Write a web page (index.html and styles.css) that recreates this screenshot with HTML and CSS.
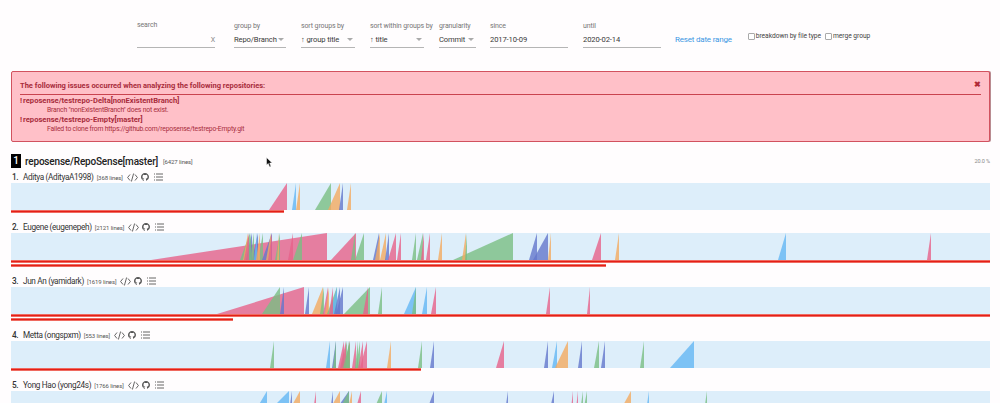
FILE: index.html
```html
<!DOCTYPE html>
<html lang="en">
<head>
<meta charset="utf-8">
<title>RepoSense</title>
<link rel="stylesheet" href="styles.css">
</head>
<body>
<svg class="defs" width="0" height="0" aria-hidden="true">
  <symbol id="i-code" viewBox="0 0 11 9"><path d="M3 1.5 .6 4.5 3 7.5M8 1.5l2.4 3L8 7.5M6.6.5 4.4 8.5" fill="none" stroke="currentColor" stroke-width=".9"/></symbol>
  <symbol id="i-gh" viewBox="0 0 16 16"><path fill="currentColor" d="M8 0C3.58 0 0 3.58 0 8c0 3.54 2.29 6.53 5.47 7.59.4.07.55-.17.55-.38 0-.19-.01-.82-.01-1.49-2.01.37-2.53-.49-2.69-.94-.09-.23-.48-.94-.82-1.13-.28-.15-.68-.52-.01-.53.63-.01 1.08.58 1.23.82.72 1.21 1.87.87 2.33.66.07-.52.28-.87.51-1.07-1.78-.2-3.64-.89-3.64-3.95 0-.87.31-1.59.82-2.15-.08-.2-.36-1.02.08-2.12 0 0 .67-.21 2.2.82.64-.18 1.32-.27 2-.27.68 0 1.36.09 2 .27 1.53-1.04 2.2-.82 2.2-.82.44 1.1.16 1.92.08 2.12.51.56.82 1.27.82 2.15 0 3.07-1.87 3.75-3.65 3.95.29.25.54.73.54 1.48 0 1.07-.01 1.93-.01 2.2 0 .21.15.46.55.38A8.013 8.013 0 0016 8c0-4.42-3.58-8-8-8z"/></symbol>
  <symbol id="i-list" viewBox="0 0 9 8"><path d="M0 1h1M2 1h7M0 4h1M2 4h7M0 7h1M2 7h7" fill="none" stroke="currentColor" stroke-width=".9"/></symbol>
</svg>

<header class="filters">
  <div class="field field-search"><span class="label label-raised">search</span><div class="control"><span>&nbsp;</span><span class="clear">X</span></div></div>
  <div class="field w52"><span class="label">group by</span><div class="control"><span>Repo/Branch</span><i class="caret"></i></div></div>
  <div class="field w54"><span class="label">sort groups by</span><div class="control"><span>↑ group title</span><i class="caret"></i></div></div>
  <div class="field w54"><span class="label nowrap">sort within groups by</span><div class="control"><span>↑ title</span><i class="caret"></i></div></div>
  <div class="field w37"><span class="label">granularity</span><div class="control"><span>Commit</span><i class="caret"></i></div></div>
  <div class="field w78 field-since"><span class="label">since</span><div class="control"><span>2017-10-09</span></div></div>
  <div class="field w78"><span class="label">until</span><div class="control"><span>2020-02-14</span></div></div>
  <a class="reset">Reset date range</a>
  <label class="check check-first"><i class="box"></i>breakdown by file type</label>
  <label class="check"><i class="box"></i>merge group</label>
</header>

<section class="alert">
  <div class="alert-head"><span>The following issues occurred when analyzing the following repositories:</span><span class="alert-close">✖</span></div>
  <div class="issue"><b class="bang">!</b><b>reposense/testrepo-Delta[nonExistentBranch]</b></div>
  <div class="issue-msg">Branch "nonExistentBranch" does not exist.</div>
  <div class="issue"><b class="bang">!</b><b>reposense/testrepo-Empty[master]</b></div>
  <div class="issue-msg">Failed to clone from https://github.com/reposense/testrepo-Empty.git</div>
</section>

<main class="summary">
  <div class="repo-head">
    <span class="repo-rank">1</span>
    <span class="repo-name">reposense/RepoSense[master]</span>
    <span class="lines">[6427 lines]</span>
    <span class="percent">20.0 %</span>
  </div>

  <article class="author">
    <div class="author-title"><span class="rank">1.</span><span class="name">Aditya (AdityaA1998)</span><span class="lines">[368 lines]</span>
      <svg class="ic ic-code"><use href="#i-code"/></svg><svg class="ic ic-gh"><use href="#i-gh"/></svg><svg class="ic ic-list"><use href="#i-list"/></svg></div>
    <svg class="ramp" viewBox="11 0 979 27" preserveAspectRatio="none">
      <path class="pink" d="M269 27 287 0V27Z"/>
      <path class="lb" d="M292 27 296 0V27Z"/>
      <path class="or" d="M296 27 300 0V27Z"/>
      <path class="gr" d="M315 27 331 0V27Z"/>
      <path class="or" d="M328 27 340 0V27Z"/><path class="or" d="M347 27 351 0V27Z"/>
      <path class="in" d="M339 27 343 0V27Z"/>
    </svg>
    <div class="line" style="width:27.9%"></div>
  </article>

  <article class="author">
    <div class="author-title"><span class="rank">2.</span><span class="name">Eugene (eugenepeh)</span><span class="lines">[2121 lines]</span>
      <svg class="ic ic-code"><use href="#i-code"/></svg><svg class="ic ic-gh"><use href="#i-gh"/></svg><svg class="ic ic-list"><use href="#i-list"/></svg></div>
    <svg class="ramp" viewBox="11 0 979 27" preserveAspectRatio="none">
      <path class="pink" d="M151 27 327 0V27Z"/>
      <path class="gr" d="M240 27 250 0V27Z"/><path class="or" d="M243 27 248 0V27Z"/><path class="in" d="M246 27 252 0V27Z"/><path class="gr" d="M247 27 251 0V27Z"/><path class="pink" d="M244 27 249 0V27Z"/>
      <path class="in" d="M252 27 258 0V27Z"/><path class="lb" d="M254 27 257 0V27Z"/><path class="gr" d="M250 27 254 0V27Z"/><path class="gr" d="M258 27 263 0V27Z"/><path class="or" d="M256 27 260 0V27Z"/>
      <path class="in" d="M262 27 272 0V27Z"/><path class="or" d="M266 27 271 0V27Z"/><path class="pink" d="M268 27 272 0V27Z"/><path class="gr" d="M275 27 280 0V27Z"/><path class="or" d="M277 27 279 0V27Z"/>
      <path class="pink" d="M288 27 293 0V27Z"/><path class="gr" d="M293 27 302 0V27Z"/>
      <path class="pink" d="M331 27 356 0V27Z"/><path class="gr" d="M351 27 355 0V27Z"/><path class="gr" d="M355 27 364 0V27Z"/>
      <path class="in" d="M373 27 379 0V27Z"/><path class="or" d="M375 27 380 0V27Z"/><path class="or" d="M380 27 386 0V27Z"/><path class="in" d="M385 27 389 0V27Z"/>
      <path class="pink" d="M388 27 396 0V27Z"/><path class="pink" d="M397 27 401 0V27Z"/>
      <path class="gr" d="M412 27 416 0V27Z"/><path class="gr" d="M417 27 423 0V27Z"/><path class="pink" d="M421 27 424 0V27Z"/><path class="pink" d="M426 27 430 0V27Z"/>
      <path class="or" d="M438 27 442 0V27Z"/><path class="gr" d="M453 27 513 0V27Z"/><path class="or" d="M462 27 466 0V27Z"/><path class="gr" d="M465 27 467 0V27Z"/>
      <path class="in" d="M529 27 537 0V27Z"/><path class="in" d="M533 27 548 0V27Z"/><path class="or" d="M548 27 551 0V27Z"/>
      <path class="pink" d="M592 27 601 0V27Z"/><path class="or" d="M615 27 619 0V27Z"/>
      <path class="lb" d="M778 27 786 0V27Z"/><path class="pink" d="M927 27 931 0V27Z"/>
    </svg>
    <div class="line" style="width:100%"></div>
    <div class="line" style="width:60.8%"></div>
  </article>

  <article class="author">
    <div class="author-title"><span class="rank">3.</span><span class="name">Jun An (yamidark)</span><span class="lines">[1619 lines]</span>
      <svg class="ic ic-code"><use href="#i-code"/></svg><svg class="ic ic-gh"><use href="#i-gh"/></svg><svg class="ic ic-list"><use href="#i-list"/></svg></div>
    <svg class="ramp" viewBox="11 0 979 27" preserveAspectRatio="none">
      <path class="pink" d="M217 27 304 0V27Z"/>
      <path class="gr" d="M262 27 280 0V27Z"/><path class="in" d="M280 27 284 0V27Z"/>
      <path class="in" d="M305 27 309 0V27Z"/><path class="or" d="M312 27 323 0V27Z"/><path class="gr" d="M320 27 324 0V27Z"/><path class="pink" d="M323 27 328 0V27Z"/><path class="or" d="M325 27 329 0V27Z"/>
      <path class="gr" d="M327 27 337 0V27Z"/><path class="lb" d="M330 27 337 0V27Z"/><path class="pink" d="M329 27 333 0V27Z"/><path class="in" d="M336 27 343 0V27Z"/><path class="in" d="M334 27 340 0V27Z"/>
      <path class="gr" d="M344 27 370 0V27Z"/><path class="pink" d="M363 27 368 0V27Z"/><path class="gr" d="M378 27 382 0V27Z"/>
      <path class="lb" d="M404 27 416 0V27Z"/><path class="gr" d="M412 27 416 0V27Z"/><path class="lb" d="M422 27 427 0V27Z"/><path class="pink" d="M431 27 436 0V27Z"/>
      <path class="pink" d="M546 27 550 0V27Z"/><path class="pink" d="M587 27 590 0V27Z"/>
    </svg>
    <div class="line" style="width:100%"></div>
    <div class="line" style="width:22.7%"></div>
  </article>

  <article class="author">
    <div class="author-title"><span class="rank">4.</span><span class="name">Metta (ongspxm)</span><span class="lines">[553 lines]</span>
      <svg class="ic ic-code"><use href="#i-code"/></svg><svg class="ic ic-gh"><use href="#i-gh"/></svg><svg class="ic ic-list"><use href="#i-list"/></svg></div>
    <svg class="ramp" viewBox="11 0 979 27" preserveAspectRatio="none">
      <path class="gr" d="M270 27 274 0V27Z"/><path class="lb" d="M326 27 330 0V27Z"/><path class="in" d="M332 27 336 0V27Z"/><path class="gr" d="M333 27 336 0V27Z"/>
      <path class="pink" d="M338 27 344 0V27Z"/><path class="gr" d="M341 27 347 0V27Z"/><path class="pink" d="M344 27 350 0V27Z"/><path class="gr" d="M345 27 349 0V27Z"/><path class="pink" d="M340 27 346 0V27Z"/><path class="gr" d="M343 27 350 0V27Z"/>
      <path class="pink" d="M352 27 356 0V27Z"/><path class="gr" d="M356 27 360 0V27Z"/><path class="pink" d="M360 27 367 0V27Z"/><path class="pink" d="M358 27 363 0V27Z"/><path class="gr" d="M355 27 358 0V27Z"/>
      <path class="or" d="M387 27 391 0V27Z"/><path class="gr" d="M418 27 422 0V27Z"/><path class="in" d="M430 27 434 0V27Z"/>
      <path class="pink" d="M496 27 504 0V27Z"/><path class="in" d="M544 27 548 0V27Z"/><path class="lb" d="M552 27 557 0V27Z"/><path class="or" d="M555 27 568 0V27Z"/>
      <path class="in" d="M578 27 582 0V27Z"/><path class="gr" d="M594 27 599 0V27Z"/><path class="in" d="M601 27 605 0V27Z"/><path class="gr" d="M640 27 644 0V27Z"/>
      <path class="lb" d="M670 27 694 0V27Z"/>
    </svg>
    <div class="line" style="width:41.9%"></div>
  </article>

  <article class="author">
    <div class="author-title"><span class="rank">5.</span><span class="name">Yong Hao (yong24s)</span><span class="lines">[1766 lines]</span>
      <svg class="ic ic-code"><use href="#i-code"/></svg><svg class="ic ic-gh"><use href="#i-gh"/></svg><svg class="ic ic-list"><use href="#i-list"/></svg></div>
    <svg class="ramp" viewBox="11 0 979 27" preserveAspectRatio="none">
      <path class="lb" d="M251 27 267 0V27Z"/><path class="lb" d="M262 27 289 0V27Z"/><path class="in" d="M288 27 292 0V27Z"/><path class="or" d="M285 27 300 0V27Z"/>
      <path class="pink" d="M312 27 316 0V27Z"/><path class="in" d="M329 27 333 0V27Z"/><path class="or" d="M325 27 340 0V27Z"/><path class="in" d="M330 27 349 0V27Z"/><path class="gr" d="M335 27 349 0V27Z"/><path class="or" d="M346 27 352 0V27Z"/>
      <path class="pink" d="M353 27 361 0V27Z"/><path class="gr" d="M370 27 382 0V27Z"/><path class="lb" d="M381 27 387 0V27Z"/>
      <path class="in" d="M424 27 434 0V27Z"/><path class="in" d="M504 27 508 0V27Z"/><path class="in" d="M548 27 554 0V27Z"/>
      <path class="pink" d="M570 27 573 0V27Z"/><path class="pink" d="M575 27 578 0V27Z"/><path class="gr" d="M579 27 583 0V27Z"/><path class="gr" d="M582 27 587 0V27Z"/>
      <path class="or" d="M616 27 631 0V27Z"/><path class="lb" d="M645 27 649 0V27Z"/><path class="gr" d="M703 27 707 0V27Z"/>
    </svg>
  </article>
</main>

<svg class="cursor" viewBox="0 0 7 11" aria-hidden="true"><path d="M.5 .5V8L2.3 6.5 3.6 10 5 9.4 3.7 6H6.2Z" fill="#111" stroke="#fff" stroke-width=".5"/></svg>
</body>
</html>
```

FILE: styles.css
```css
html, body { margin: 0; padding: 0; height: 403px; overflow: hidden; }
body {
  background: #fffdfe;
  color: #333;
  font-family: Roboto, "Noto Sans", sans-serif;
  font-size: 8px;
  position: relative;
}
.defs { position: absolute; }

/* filter bar */
.filters {
  display: flex;
  align-items: flex-start;
  gap: 15px;
  height: 71px;
  box-sizing: border-box;
  padding: 20px 0 0 137px;
  font-size: 7.6px;
  letter-spacing: -.12px;
}
.field { display: flex; flex-direction: column; }
.field-search { width: 78px; margin-right: 4px; }
.field-since { margin-left: -1px; }
.w37 { width: 37px; }
.w52 { width: 52px; }
.w54 { width: 54px; }
.w78 { width: 78px; }
.label { height: 11px; line-height: 10px; color: #777; font-size: 7px; padding-top: 1px; }
.label-raised { padding-top: 0; height: 12px; }
.nowrap { white-space: nowrap; }
.control {
  display: flex;
  align-items: center;
  justify-content: space-between;
  height: 15px;
  border-bottom: 1px solid #b5b5b5;
  color: #3a3a3a;
  white-space: nowrap;
}
.clear { color: #888; font-size: 7px; }
.caret {
  width: 0; height: 0;
  border-left: 3px solid transparent;
  border-right: 3px solid transparent;
  border-top: 3.5px solid #aaa;
  margin-right: 2px;
}
.reset { color: #3b97e3; font-size: 8px; letter-spacing: -.2px; margin: 15px 0 0 -1px; white-space: nowrap; }
.check { display: flex; align-items: center; gap: 1px; margin-top: 12px; color: #444; font-size: 6.7px; letter-spacing: -.05px; white-space: nowrap; }
.check-first { margin-left: 1px; }
.check + .check { margin-left: -11px; }
.box { width: 5px; height: 5px; border: 1px solid #aaa; border-radius: 1px; background: #fff; display: block; }

/* alert */
.alert {
  margin: 0 10px 0 11px;
  height: 71px;
  box-sizing: border-box;
  padding: 6px 8px 0;
  background: #ffc0c8;
  border: 1px solid #d2525f;
  border-radius: 2px;
  box-shadow: 1px 0 0 #b98a90;
  color: #a82c3c;
  font-size: 7.5px;
}
.alert-head {
  display: flex;
  justify-content: space-between;
  align-items: center;
  height: 16px;
  box-sizing: content-box;
  border-bottom: 1px solid #c9434f;
  font-weight: 700;
  letter-spacing: 0;
  margin-bottom: 1px;
}
.alert-head > span:first-child { padding-bottom: 2px; }
.alert-close { font-size: 8px; color: #b02a37; padding-bottom: 3px; }
.issue { height: 10px; line-height: 9px; font-size: 7.6px; letter-spacing: 0; }
.bang { color: #b02a37; margin-right: 1px; }
.issue-msg { height: 9px; line-height: 9px; padding-left: 27px; font-size: 6.8px; letter-spacing: -.19px; }

/* summary */
.summary { margin: 12px 10px 0 11px; }
.repo-head { display: flex; align-items: center; height: 14px; position: relative; }
.repo-rank {
  width: 10px; height: 14px; line-height: 14px;
  background: #000; color: #fff;
  text-align: center; font-size: 10px; font-weight: 500;
  margin-right: 4px;
}
.repo-name { font-size: 10px; font-weight: 500; letter-spacing: -.18px; color: #222; margin-right: 5px; white-space: nowrap; }
.lines { font-size: 6px; letter-spacing: -.1px; color: #555; white-space: nowrap; }
.percent { margin-left: auto; color: #888; font-size: 5.5px; letter-spacing: -.1px; }
.author { margin-bottom: 8px; }
.author-title {
  display: flex;
  align-items: center;
  height: 12px;
  padding-top: 3px;
  font-size: 8.2px;
  letter-spacing: -.33px;
  color: #333;
}
.author + .author .author-title { padding-top: 0; }
.rank { width: 12px; margin-left: 1px; font-weight: 500; }
.name { margin-left: -1px; white-space: nowrap; margin-right: 3px; }
.ic { color: #555; flex: none; display: block; }
.ic-code { width: 11px; height: 9px; margin-left: 4px; }
.ic-gh { width: 8px; height: 8px; margin-left: 3px; }
.ic-list { width: 9px; height: 8px; margin-left: 5px; }
.ramp { display: block; width: 100%; height: 27px; background: #ddeefa; }
.line {
  height: 3px;
  background: linear-gradient(#ef6a60 0 1px, #e41f17 1px 2px, #ef6a60 2px 3px);
  margin-top: 1px;
}
.ramp + .line { margin-top: 0; }

.pink { fill: #e7618a; fill-opacity: .8; }
.gr { fill: #7abe83; fill-opacity: .8; }
.or { fill: #f4aa60; fill-opacity: .8; }
.lb { fill: #64b7f4; fill-opacity: .8; }
.in { fill: #6477cc; fill-opacity: .8; }

.cursor { position: absolute; left: 266px; top: 157px; width: 7px; height: 11px; }
```
